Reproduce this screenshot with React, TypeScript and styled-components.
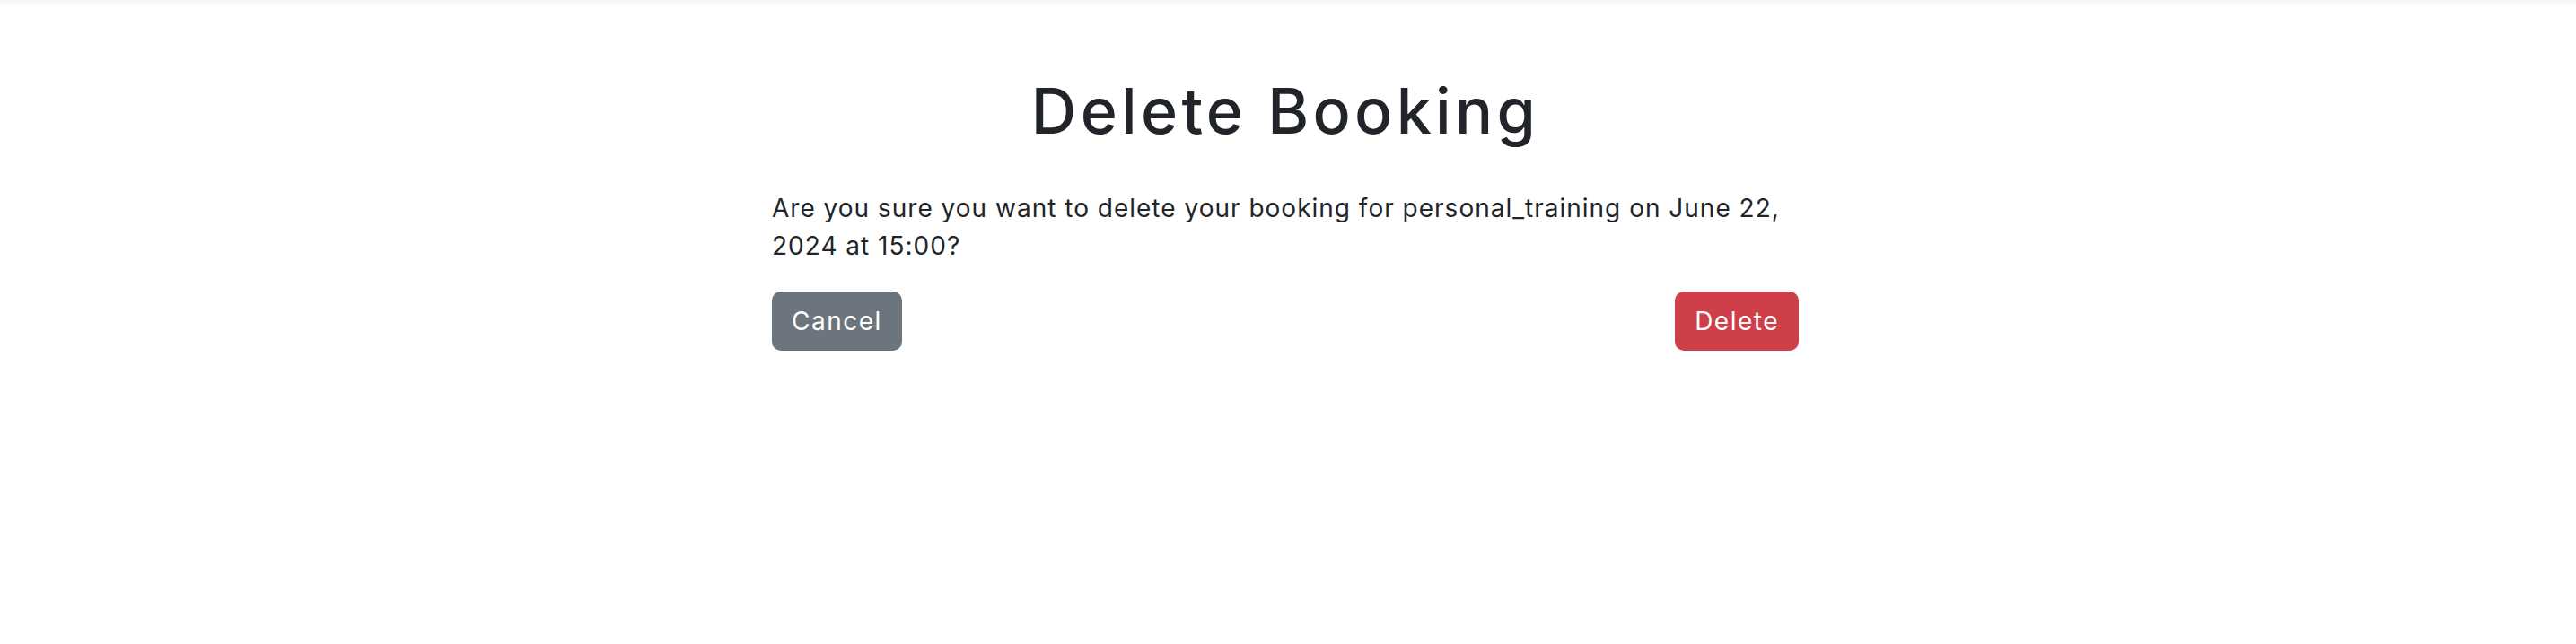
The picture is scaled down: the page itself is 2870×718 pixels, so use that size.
import React from "react";
import styled, { createGlobalStyle } from "styled-components";

const Global = createGlobalStyle`
  html, body { margin: 0; padding: 0; background: #ffffff; }
  body { font-family: Inter, "Liberation Sans", sans-serif; color: #212529; }
`;

const TopBar = styled.div`
  height: 4px;
  background: #f8f8f8;
  box-shadow: 0 2px 4px rgba(0, 0, 0, 0.025);
`;

const Page = styled.main`
  display: flex;
  justify-content: center;
  padding: 78px 6px 0 0;
`;

const Panel = styled.section`
  width: 1144px;
  display: flex;
  flex-direction: column;
`;

const Title = styled.h1`
  margin: 0 0 45px;
  font-size: 70px;
  line-height: 84px;
  font-weight: 500;
  letter-spacing: 4.3px;
  text-align: center;
  color: #212529;
`;

const Message = styled.p`
  margin: 0 0 30px;
  font-size: 28px;
  line-height: 42px;
  font-weight: 400;
  letter-spacing: 1px;
  color: #212529;
`;

const Actions = styled.div`
  display: flex;
  justify-content: space-between;
  align-items: center;
`;

const Button = styled.button<{ $variant: "secondary" | "danger" }>`
  font-family: inherit;
  font-size: 28px;
  line-height: 42px;
  font-weight: 400;
  letter-spacing: 1.5px;
  padding: 11px 21px;
  border: 1px solid transparent;
  border-radius: 10px;
  color: #ffffff;
  cursor: pointer;
  background: ${(p) => (p.$variant === "danger" ? "#cf3f4a" : "#6c757d")};
`;

export default function App() {
  return (
    <>
      <Global />
      <TopBar />
      <Page>
        <Panel>
          <Title>Delete Booking</Title>
          <Message>
            Are you sure you want to delete your booking for personal_training on June 22, 2024 at 15:00?
          </Message>
          <Actions>
            <Button $variant="secondary">Cancel</Button>
            <Button $variant="danger">Delete</Button>
          </Actions>
        </Panel>
      </Page>
    </>
  );
}
